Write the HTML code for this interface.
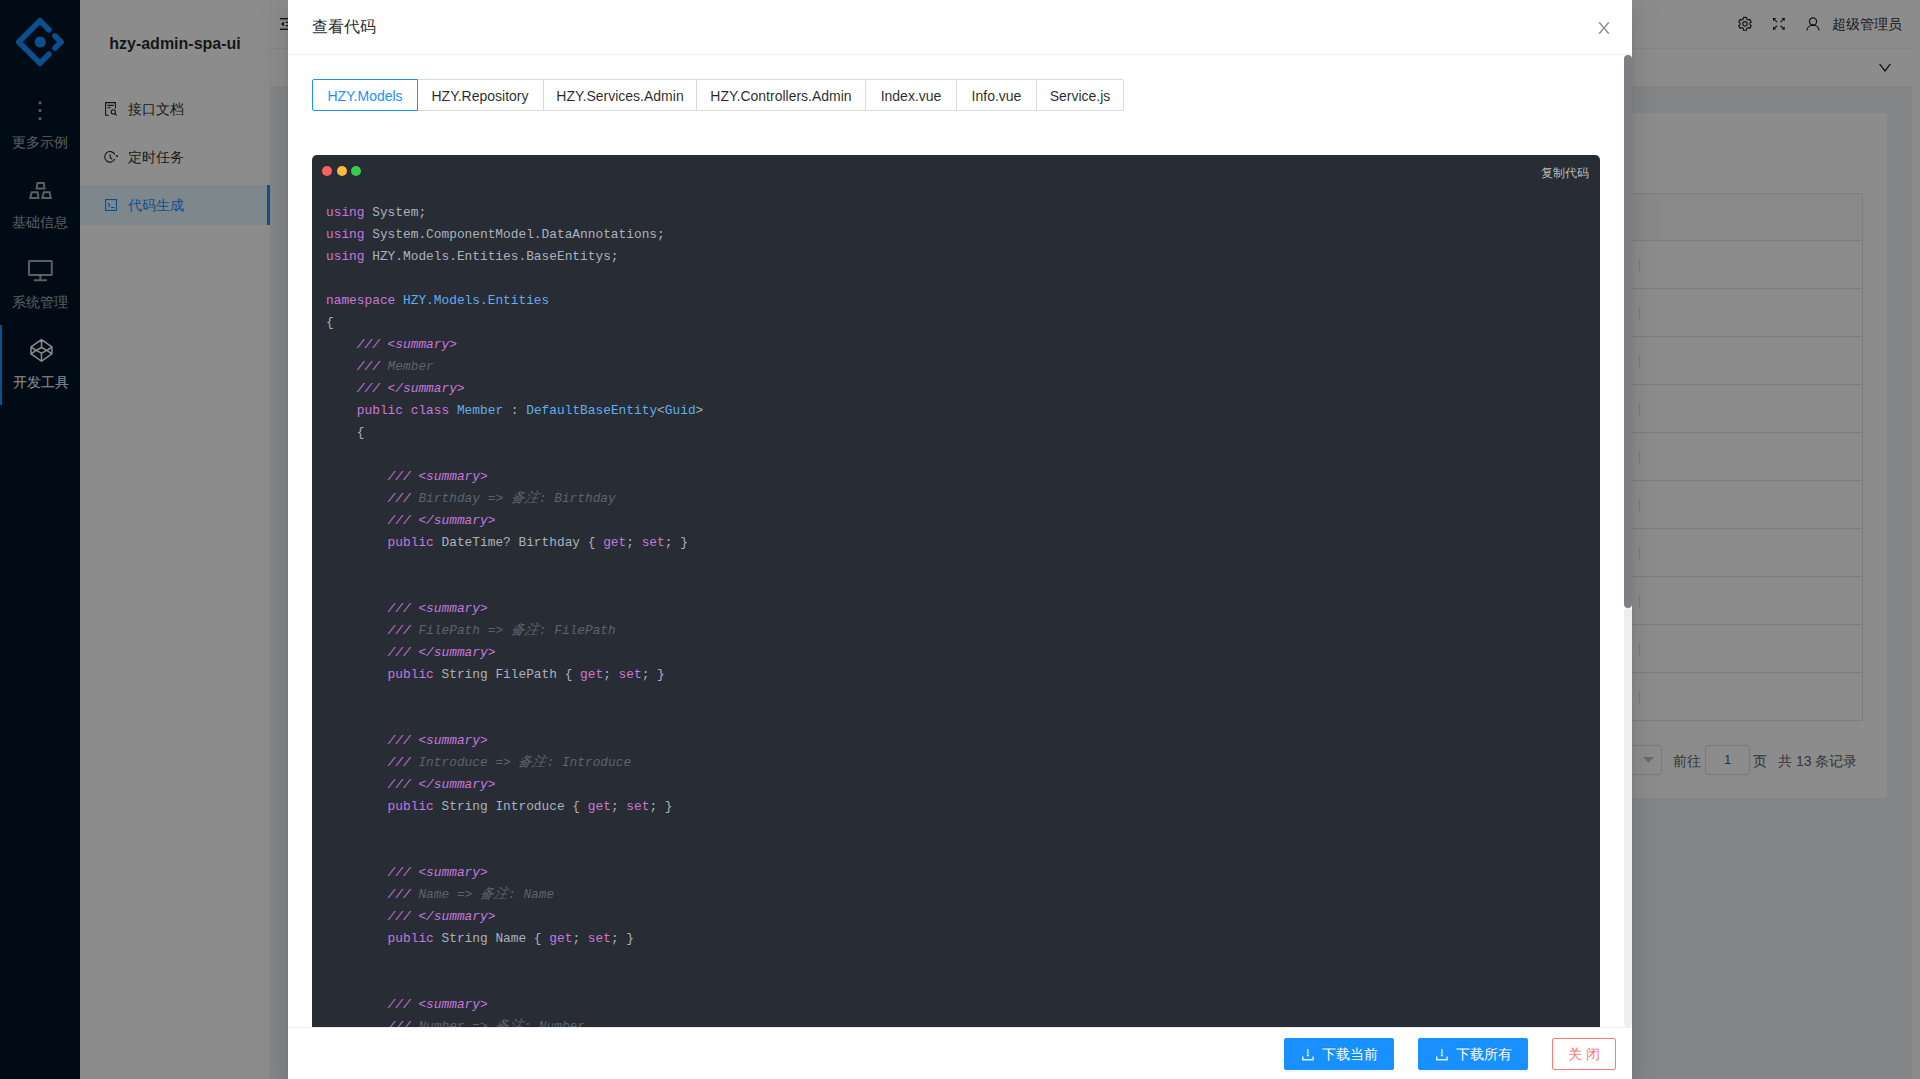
<!DOCTYPE html>
<html><head><meta charset="utf-8">
<style>
*{box-sizing:border-box;}
html,body{margin:0;padding:0;}
body{width:1920px;height:1079px;overflow:hidden;position:relative;font-family:"Liberation Sans",sans-serif;background:#fff;color:rgba(0,0,0,.85);}
.abs{position:absolute;}
/* dark sidebar */
#s1{left:0;top:0;width:80px;height:1079px;background:#001529;}
#s1 .item{position:absolute;left:0;width:80px;height:80px;color:rgba(255,255,255,.65);}
#s1 .item .lbl{position:absolute;left:0;width:80px;text-align:center;font-size:14px;line-height:20px;top:47px;}
#s1 .sel .lbl{left:1px;}
#s1 .item svg{position:absolute;}
#s1 .sel{color:#fff;}
#s1 .bar{position:absolute;left:0;top:0;width:2px;height:80px;background:#1890ff;}
/* second sidebar */
#s2{left:80px;top:0;width:191px;height:1079px;background:#fff;border-right:1px solid #f0f0f0;}
#s2 .title{position:absolute;left:0;top:33px;width:190px;text-align:center;font-weight:bold;font-size:16px;line-height:22px;color:rgba(0,0,0,.85);}
#s2 .mi{position:absolute;left:0;width:190px;height:40px;font-size:14px;line-height:40px;color:rgba(0,0,0,.85);}
#s2 .mi span{position:absolute;left:48px;top:0;}
#s2 .mi svg{position:absolute;left:24px;top:13px;}
#s2 .mi.sel{background:#e6f7ff;color:#1890ff;}
#s2 .mi.sel:after{content:"";position:absolute;right:0;top:0;width:3px;height:40px;background:#1890ff;}
/* header */
#hdr{left:271px;top:0;width:1641px;height:49px;background:#fff;border-bottom:1px solid #f0f0f0;}
#tabs{left:271px;top:49px;width:1641px;height:37px;background:#fff;}
#rstrip{left:1912px;top:0;width:8px;height:1079px;background:#fff;}
#content{left:271px;top:86px;width:1641px;height:993px;background:#f0f2f5;}
#card{left:0;top:113px;width:1887px;height:685px;background:#fff;}
#overlay{left:0;top:0;width:1920px;height:1079px;background:rgba(0,0,0,.45);}
/* modal */
#modal{left:288px;top:0;width:1344px;height:1080px;background:#fff;box-shadow:0 3px 6px -4px rgba(0,0,0,.12),0 6px 16px 0 rgba(0,0,0,.08),0 9px 28px 8px rgba(0,0,0,.05);overflow:hidden;}
#mh{position:absolute;left:0;top:0;width:1344px;height:55px;border-bottom:1px solid #f0f0f0;}
#mh .t{position:absolute;left:24px;top:16px;font-size:16px;line-height:22px;color:rgba(0,0,0,.85);}
#mbody{position:absolute;left:0;top:55px;width:1344px;height:972px;overflow:hidden;}
#mf{position:absolute;left:0;top:1027px;width:1344px;height:53px;border-top:1px solid #f0f0f0;}
.rb{position:absolute;top:24px;height:32px;border:1px solid #d9d9d9;font-size:14px;line-height:32px;text-align:center;color:rgba(0,0,0,.85);background:#fff;}
#code{position:absolute;left:24px;top:100px;width:1288px;height:900px;background:#282c34;border-radius:5px;}
.dot{position:absolute;top:11px;width:10px;height:10px;border-radius:50%;}
#copy{position:absolute;right:11px;top:10px;font-size:12px;line-height:16px;color:#bbb;}
pre{margin:0;position:absolute;left:14px;top:47px;font-family:"Liberation Mono",monospace;font-size:12.83px;line-height:22px;color:#abb2bf;white-space:pre;}
.k{color:#c678dd;}
.ti{color:#61aeee;}
.dt{color:#c678dd;font-style:italic;}
.cm{color:#5c6370;font-style:italic;}
.cj{font-size:14px;line-height:0;display:inline-block;transform:skewX(-14deg);}
#sb{position:absolute;left:1336px;top:0;width:8px;height:972px;}
.btn{position:absolute;top:10px;height:32px;font-size:14px;line-height:30px;border-radius:2px;text-align:center;font-weight:500;}
.bp{background:#1890ff;border:1px solid #1890ff;color:#fff;text-shadow:0 -1px 0 rgba(0,0,0,.12);box-shadow:0 2px 0 rgba(0,0,0,.045);}
</style></head>
<body>
<!-- dark sidebar -->
<div id="s1" class="abs">
  <svg class="abs" style="left:16px;top:18px;overflow:visible" width="48" height="48" viewBox="0 0 48 48"><g fill="none" stroke="#1890ff" stroke-width="5.6" stroke-linecap="round" stroke-linejoin="round"><path d="M32.9 11.7L24 2.8L2.8 24L24 45.2L32.9 36.3"/><path d="M39 17.9L45.1 24L39 30.1"/></g><circle cx="24.2" cy="24" r="5.6" fill="#1890ff"/></svg>
  <div class="item" style="top:85px;">
    <svg style="left:28px;top:13px;" width="24" height="24" viewBox="0 0 24 24" fill="currentColor"><circle cx="12" cy="4.8" r="1.5"/><circle cx="12" cy="12.6" r="1.5"/><circle cx="12" cy="20.4" r="1.5"/></svg>
    <div class="lbl">更多示例</div>
  </div>
  <div class="item" style="top:165px;">
    <svg style="left:28px;top:13px;" width="24" height="24" viewBox="0 0 24 24" fill="none" stroke="currentColor" stroke-width="2"><path d="M9.5 4.9H15.8L16.6 10.4H8.6z"/><path d="M3.7 14.3H9.7L10.4 19.9H2.3z"/><path d="M15.8 14.3H21.6L22.7 19.9H14.3z"/></svg>
    <div class="lbl">基础信息</div>
  </div>
  <div class="item" style="top:245px;">
    <svg style="left:28px;top:13px;overflow:visible" width="24" height="24" viewBox="0 0 24 24" fill="none" stroke="currentColor" stroke-width="2"><rect x="1" y="3" width="22.8" height="14" rx="0.5"/><path d="M12.4 17v4.5M5.9 22.3H18.9"/></svg>
    <div class="lbl">系统管理</div>
  </div>
  <div class="item sel" style="top:325px;">
    <div class="bar"></div>
    <svg style="left:28px;top:13px;overflow:visible" width="24" height="24" viewBox="0 0 24 24" fill="none" stroke="currentColor" stroke-width="1.5" stroke-linejoin="round"><path d="M13.5 1.7L23.9 8.8V15.9L13.5 23.25L3 15.9V8.8z M13.5 1.7V9.5 M3 8.8L8.1 12.4L3 15.9 M23.9 8.8L18.9 12.4L23.9 15.9 M13.5 23.25V15.2 M13.5 9.5L18.9 12.4L13.5 15.2L8.1 12.4z"/></svg>
    <div class="lbl">开发工具</div>
  </div>
</div>
<div id="s2" class="abs">
  <div class="title">hzy-admin-spa-ui</div>
  <div class="mi" style="top:89px;"><svg width="14" height="14" viewBox="0 0 14 14" fill="none" stroke="currentColor" stroke-width="1.1" style="left:24px;top:13px;position:absolute;overflow:visible"><path d="M4.8 13.3H1.6V0.6H11.4V6.4"/><path d="M3.4 3.4H9.8M3.4 5.7H6.8"/><circle cx="9.3" cy="9.9" r="2.1"/><path d="M10.9 11.5L12.6 13.6"/></svg><span>接口文档</span></div>
  <div class="mi" style="top:137px;"><svg width="14" height="14" viewBox="0 0 14 14" fill="none" stroke="currentColor" stroke-width="1.1" style="left:24px;top:13px;position:absolute;overflow:visible"><path d="M10.8 4.56A5.3 5.3 0 1 0 10.8 9.04"/><path d="M6.2 4.3V7.5L8.3 9.3"/><rect x="11.8" y="5.3" width="2.2" height="1.5" fill="currentColor" stroke="none"/></svg><span>定时任务</span></div>
  <div class="mi sel" style="top:185px;"><svg width="14" height="14" viewBox="0 0 14 14" fill="none" stroke="currentColor" stroke-width="1.1" style="left:24px;top:13px;position:absolute;overflow:visible"><rect x="1.55" y="1.55" width="10.9" height="10.9"/><path d="M4.4 5.3L5.8 7L4.4 8.6M7.2 9.5H10" stroke-linecap="round" stroke-linejoin="round"/></svg><span>代码生成</span></div>
</div>
<div id="hdr" class="abs">
  <svg class="abs" style="left:9px;top:17px;" width="14" height="14" viewBox="0 0 14 14" fill="currentColor"><rect x="0" y="1" width="14" height="1.4"/><rect x="0" y="11.6" width="14" height="1.4"/><rect x="6" y="4.6" width="8" height="1.4"/><rect x="6" y="8" width="8" height="1.4"/><path d="M1 7L4 4.6V9.4z"/></svg>
  <svg class="abs" style="left:1467px;top:17px;overflow:visible" width="14" height="14" viewBox="0 0 14 14" fill="none" stroke="currentColor" stroke-width="1.15" stroke-linejoin="round"><path d="M5.37 2.12 L5.52 0.42 L8.48 0.42 L8.63 2.12 L10.28 3.08 L11.83 2.35 L13.31 4.92 L11.91 5.90 L11.91 7.80 L13.31 8.78 L11.83 11.35 L10.28 10.62 L8.63 11.58 L8.48 13.28 L5.52 13.28 L5.37 11.58 L3.72 10.62 L2.17 11.35 L0.69 8.78 L2.09 7.80 L2.09 5.90 L0.69 4.92 L2.17 2.35 L3.72 3.08z"/><circle cx="7" cy="6.85" r="2.2"/></svg>
  <svg class="abs" style="left:1501px;top:17px;overflow:visible" width="14" height="14" viewBox="0 0 14 14" fill="currentColor" stroke="currentColor" stroke-width="1.1" stroke-linecap="round"><path d="M1.6 1.6L4.8 4.9M12.1 1.6L8.8 4.9M1.6 12L4.8 9M12.1 12L8.8 9" fill="none"/><path d="M1 1H4.2L1 4.2z M12.7 1H9.5L12.7 4.2z M1 12.6H4.2L1 9.4z M12.7 12.6H9.5L12.7 9.4z" stroke="none"/></svg>
  <svg class="abs" style="left:1535px;top:17px;" width="14" height="14" viewBox="0 0 14 14" fill="none" stroke="currentColor" stroke-width="1.2"><circle cx="7" cy="4.5" r="3.6"/><path d="M1 13.5C1 10.2 3.7 8.2 7 8.2S13 10.2 13 13.5"/></svg>
  <div class="abs" style="left:1561px;top:14px;font-size:14px;line-height:20px;">超级管理员</div>
</div>
<div id="tabs" class="abs">
  <svg class="abs" style="left:1608px;top:14px;" width="12" height="9" viewBox="0 0 12 9" fill="none" stroke="currentColor" stroke-width="1.3"><path d="M0.6 0.8L6 8L11.4 0.8"/></svg>
</div>
<div id="content" class="abs"></div>
<div class="abs" style="left:295px;top:113px;width:1592px;height:685px;background:#fff;"></div>
<div class="abs" style="left:319px;top:193px;width:1544px;height:528px;border-left:1px solid #e4e4e4;border-right:1px solid #e4e4e4;border-top:1px solid #e4e4e4;border-bottom:1px solid #e4e4e4;"></div>
<div class="abs" style="left:320px;top:194px;width:1542px;height:46px;background:#fafafa;"></div>
<div class="abs" style="left:319px;top:240px;width:1543px;height:1px;background:#e4e4e4;"></div><div class="abs" style="left:319px;top:288px;width:1543px;height:1px;background:#e4e4e4;"></div><div class="abs" style="left:319px;top:336px;width:1543px;height:1px;background:#e4e4e4;"></div><div class="abs" style="left:319px;top:384px;width:1543px;height:1px;background:#e4e4e4;"></div><div class="abs" style="left:319px;top:432px;width:1543px;height:1px;background:#e4e4e4;"></div><div class="abs" style="left:319px;top:480px;width:1543px;height:1px;background:#e4e4e4;"></div><div class="abs" style="left:319px;top:528px;width:1543px;height:1px;background:#e4e4e4;"></div><div class="abs" style="left:319px;top:576px;width:1543px;height:1px;background:#e4e4e4;"></div><div class="abs" style="left:319px;top:624px;width:1543px;height:1px;background:#e4e4e4;"></div><div class="abs" style="left:319px;top:672px;width:1543px;height:1px;background:#e4e4e4;"></div><div class="abs" style="left:1639px;top:259px;width:1px;height:13px;background:#dcdfe6;"></div><div class="abs" style="left:1639px;top:307px;width:1px;height:13px;background:#dcdfe6;"></div><div class="abs" style="left:1639px;top:355px;width:1px;height:13px;background:#dcdfe6;"></div><div class="abs" style="left:1639px;top:403px;width:1px;height:13px;background:#dcdfe6;"></div><div class="abs" style="left:1639px;top:451px;width:1px;height:13px;background:#dcdfe6;"></div><div class="abs" style="left:1639px;top:499px;width:1px;height:13px;background:#dcdfe6;"></div><div class="abs" style="left:1639px;top:547px;width:1px;height:13px;background:#dcdfe6;"></div><div class="abs" style="left:1639px;top:595px;width:1px;height:13px;background:#dcdfe6;"></div><div class="abs" style="left:1639px;top:643px;width:1px;height:13px;background:#dcdfe6;"></div><div class="abs" style="left:1639px;top:691px;width:1px;height:13px;background:#dcdfe6;"></div>
<div class="abs" style="left:1550px;top:745px;width:112px;height:30px;border:1px solid #dcdfe6;border-radius:3px;"></div>
<svg class="abs" style="left:1643px;top:757px;" width="11" height="6" viewBox="0 0 11 6"><path d="M0 0H11L5.5 6z" fill="#c0c4cc"/></svg>
<div class="abs" style="left:1673px;top:752px;font-size:14px;line-height:18px;color:#606266;">前往</div>
<div class="abs" style="left:1705px;top:745px;width:45px;height:30px;border:1px solid #dcdfe6;border-radius:3px;font-size:13px;line-height:28px;text-align:center;color:#606266;">1</div>
<div class="abs" style="left:1753px;top:752px;font-size:14px;line-height:18px;color:#606266;">页</div>
<div class="abs" style="left:1778px;top:752px;font-size:14px;line-height:18px;color:#606266;">共 13 条记录</div>
<div id="rstrip" class="abs"></div>
<div id="overlay" class="abs"></div>
<div id="modal" class="abs">
  <div id="mh"><div class="t">查看代码</div><svg class="abs" style="left:1308px;top:20px;" width="16" height="16" viewBox="64 64 896 896" fill="rgba(0,0,0,.45)"><path d="M563.8 512l262.5-312.9c4.4-5.2.7-13.1-6.1-13.1h-79.8c-4.7 0-9.200 2.1-12.3 5.7L511.6 449.8 295.1 191.7c-3-3.6-7.5-5.7-12.3-5.7H203c-6.8 0-10.5 7.9-6.1 13.1L459.4 512 196.9 824.9A7.95 7.95 0 00203 838h79.8c4.7 0 9.2-2.1 12.3-5.7l216.5-258.1 216.5 258.1c3 3.6 7.5 5.7 12.3 5.7h79.8c6.8 0 10.5-7.9 6.1-13.1L563.8 512z"/></svg></div>
  <div id="mbody">
    <div class="rb" style="left:24px;width:106px;border-color:#1890ff;color:#1890ff;border-radius:2px 0 0 2px;z-index:2;">HZY.Models</div>
    <div class="rb" style="left:129px;width:127px;border-left:none;">HZY.Repository</div>
    <div class="rb" style="left:255px;width:154px;">HZY.Services.Admin</div>
    <div class="rb" style="left:408px;width:170px;">HZY.Controllers.Admin</div>
    <div class="rb" style="left:577px;width:92px;">Index.vue</div>
    <div class="rb" style="left:668px;width:81px;">Info.vue</div>
    <div class="rb" style="left:748px;width:88px;border-radius:0 2px 2px 0;">Service.js</div>
    <div id="code">
      <div class="dot" style="left:10px;background:#fc625d;"></div>
      <div class="dot" style="left:24.5px;background:#fdbc40;"></div>
      <div class="dot" style="left:39px;background:#35cd4b;"></div>
      <div id="copy">复制代码</div>
<pre><span class="k">using</span> System;
<span class="k">using</span> System.ComponentModel.DataAnnotations;
<span class="k">using</span> HZY.Models.Entities.BaseEntitys;

<span class="k">namespace</span> <span class="ti">HZY.Models.Entities</span>
{
    <span class="dt">/// &lt;summary&gt;</span>
    <span class="dt">///</span><span class="cm"> Member</span>
    <span class="dt">/// &lt;/summary&gt;</span>
    <span class="k">public</span> <span class="k">class</span> <span class="ti">Member</span> : <span class="ti">DefaultBaseEntity</span>&lt;<span class="ti">Guid</span>&gt;
    {

        <span class="dt">/// &lt;summary&gt;</span>
        <span class="dt">///</span><span class="cm"> Birthday =&gt; <span class="cj">备注</span>: Birthday</span>
        <span class="dt">/// &lt;/summary&gt;</span>
        <span class="k">public</span> DateTime? Birthday { <span class="k">get</span>; <span class="k">set</span>; }


        <span class="dt">/// &lt;summary&gt;</span>
        <span class="dt">///</span><span class="cm"> FilePath =&gt; <span class="cj">备注</span>: FilePath</span>
        <span class="dt">/// &lt;/summary&gt;</span>
        <span class="k">public</span> String FilePath { <span class="k">get</span>; <span class="k">set</span>; }


        <span class="dt">/// &lt;summary&gt;</span>
        <span class="dt">///</span><span class="cm"> Introduce =&gt; <span class="cj">备注</span>: Introduce</span>
        <span class="dt">/// &lt;/summary&gt;</span>
        <span class="k">public</span> String Introduce { <span class="k">get</span>; <span class="k">set</span>; }


        <span class="dt">/// &lt;summary&gt;</span>
        <span class="dt">///</span><span class="cm"> Name =&gt; <span class="cj">备注</span>: Name</span>
        <span class="dt">/// &lt;/summary&gt;</span>
        <span class="k">public</span> String Name { <span class="k">get</span>; <span class="k">set</span>; }


        <span class="dt">/// &lt;summary&gt;</span>
        <span class="dt">///</span><span class="cm"> Number =&gt; <span class="cj">备注</span>: Number</span>
        <span class="dt">/// &lt;/summary&gt;</span>
        <span class="k">public</span> String Number { <span class="k">get</span>; <span class="k">set</span>; }

</pre>
    </div>
    <div id="sb"><div class="abs" style="left:0;top:553px;width:8px;height:419px;background:#eee;border-radius:4px;"></div><div class="abs" style="left:0;top:0;width:8px;height:553px;background:#7e7f83;border-radius:4px;"></div></div>
  </div>
  <div id="mf">
    <div class="btn bp" style="left:996px;width:110px;"><svg class="abs" style="left:16px;top:9px;overflow:visible" width="14" height="14" viewBox="0 0 14 14" fill="none" stroke="#fff" stroke-width="1.5"><path d="M6.9 1V7.6" stroke-opacity=".75"/><path d="M5.4 7.2L6.9 8.8L8.4 7.2z" fill="#fff" stroke="none"/><path d="M1.8 8.6V11.8H12.1V8.6" stroke-opacity=".85"/></svg><span class="abs" style="left:37px;top:0;">下载当前</span></div>
    <div class="btn bp" style="left:1130px;width:110px;"><svg class="abs" style="left:16px;top:9px;overflow:visible" width="14" height="14" viewBox="0 0 14 14" fill="none" stroke="#fff" stroke-width="1.5"><path d="M6.9 1V7.6" stroke-opacity=".75"/><path d="M5.4 7.2L6.9 8.8L8.4 7.2z" fill="#fff" stroke="none"/><path d="M1.8 8.6V11.8H12.1V8.6" stroke-opacity=".85"/></svg><span class="abs" style="left:37px;top:0;">下载所有</span></div>
    <div class="btn" style="left:1264px;width:64px;border:1px solid #ff7875;color:#ff7875;box-shadow:0 2px 0 rgba(0,0,0,.015);">关 闭</div>
  </div>
</div>
</body></html>
